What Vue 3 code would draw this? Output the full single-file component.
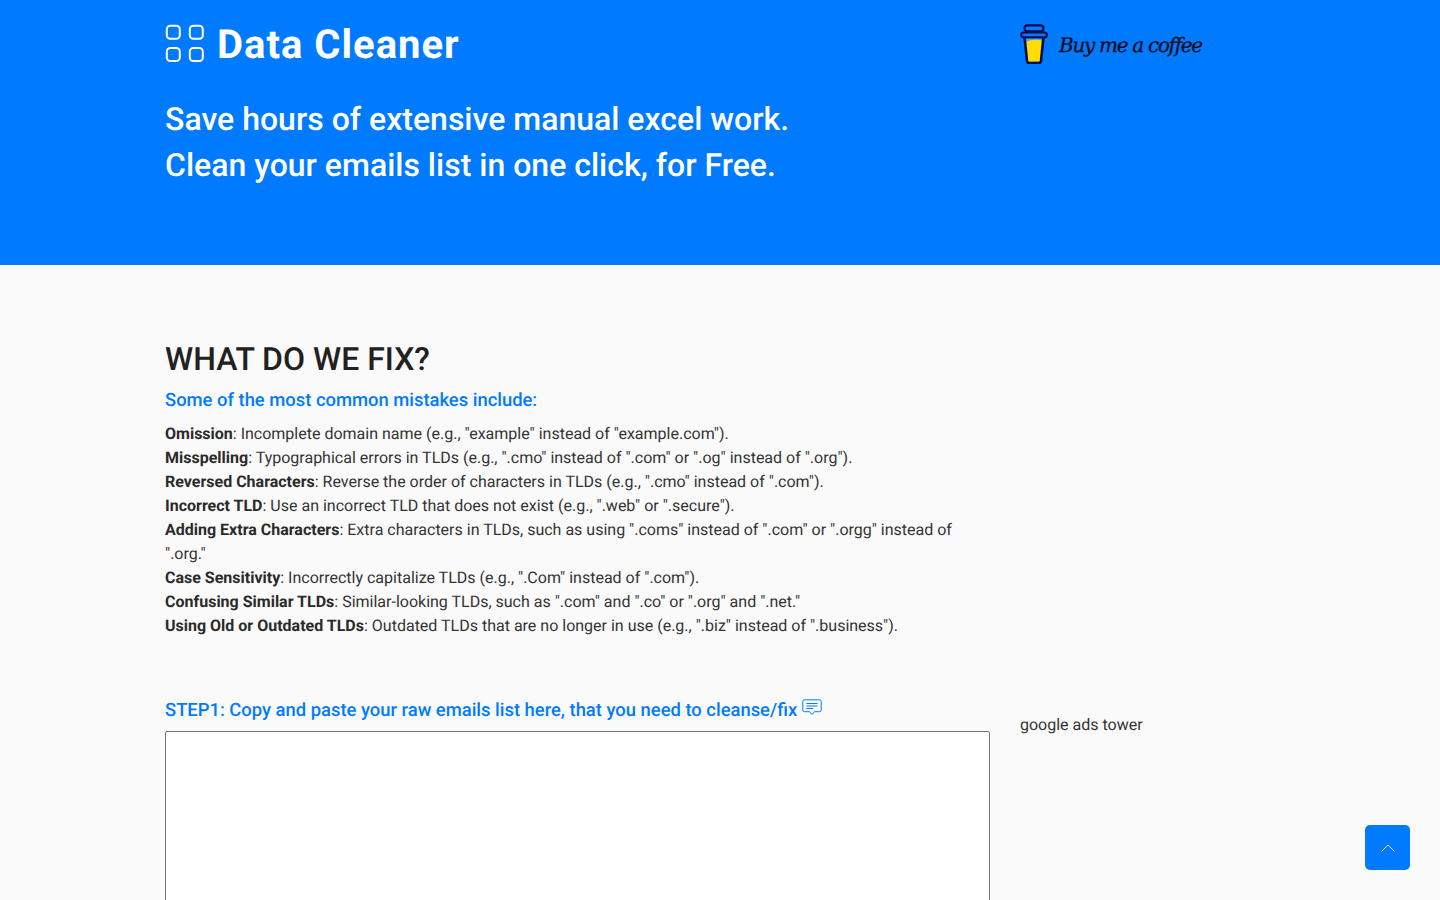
<script setup>
const mistakes = [
  ['Omission', ': Incomplete domain name (e.g., "example" instead of "example.com").'],
  ['Misspelling', ': Typographical errors in TLDs (e.g., ".cmo" instead of ".com" or ".og" instead of ".org").'],
  ['Reversed Characters', ': Reverse the order of characters in TLDs (e.g., ".cmo" instead of ".com").'],
  ['Incorrect TLD', ': Use an incorrect TLD that does not exist (e.g., ".web" or ".secure").'],
  ['Adding Extra Characters', ': Extra characters in TLDs, such as using ".coms" instead of ".com" or ".orgg" instead of ".org."'],
  ['Case Sensitivity', ': Incorrectly capitalize TLDs (e.g., ".Com" instead of ".com").'],
  ['Confusing Similar TLDs', ': Similar-looking TLDs, such as ".com" and ".co" or ".org" and ".net."'],
  ['Using Old or Outdated TLDs', ': Outdated TLDs that are no longer in use (e.g., ".biz" instead of ".business").'],
]
</script>

<template>
  <div class="page">
    <header class="hero">
      <div class="container hero-grid">
        <div class="hero-main">
          <div class="brand">
            <svg class="logo" viewBox="0 0 40 40" width="40" height="40" fill="none" stroke="#fff" stroke-width="2">
              <rect x="1.8" y="1.8" width="13" height="13" rx="3.5" />
              <rect x="24.8" y="1.8" width="13" height="13" rx="3.5" />
              <rect x="1.8" y="24" width="13" height="13" rx="3.5" />
              <rect x="24.8" y="24" width="13" height="13" rx="3.5" />
            </svg>
            <span class="brand-name">Data Cleaner</span>
          </div>
          <h2 class="tagline">Save hours of extensive manual excel work.<br />Clean your emails list in one click, for Free.</h2>
        </div>
        <div class="coffee">
          <svg class="cup" viewBox="0 0 28 40" width="28" height="40">
            <path d="M4.5 13 L7 37 Q7.3 39 9.5 39 H18.5 Q20.7 39 21 37 L23.5 13 Z" fill="#fff" fill-opacity=".3" />
            <path d="M5.5 18 Q14 14.5 22.5 16.5 L20.3 36 Q20 37.5 18.5 37.5 H9.5 Q8 37.5 7.7 36 Z" fill="#ffdd00" />
            <path d="M4.5 13 L7 37 Q7.3 39 9.5 39 H18.5 Q20.7 39 21 37 L23.5 13" fill="none" stroke="#0d0c4a" stroke-width="2.6" />
            <rect x="1.2" y="8.5" width="25.6" height="4.8" rx="2.4" fill="none" stroke="#0d0c4a" stroke-width="2.2" />
            <rect x="4.5" y="1.4" width="19" height="6" rx="3" fill="none" stroke="#0d0c4a" stroke-width="2.2" />
          </svg>
          <span class="coffee-text">Buy me a coffee</span>
        </div>
      </div>
    </header>

    <main class="container content">
      <div class="main-col">
        <h2 class="heading">WHAT DO WE FIX?</h2>
        <h3 class="sub">Some of the most common mistakes include:</h3>
        <div class="list">
          <div v-for="m in mistakes" :key="m[0]"><strong>{{ m[0] }}</strong>{{ m[1] }}</div>
        </div>
        <h3 class="step">
          STEP1: Copy and paste your raw emails list here, that you need to cleanse/fix
          <svg class="chat" viewBox="0 0 20 18" width="20" height="18" fill="none" stroke="#007bff" stroke-width="1">
            <path d="M2.5 .8 H17.5 Q19.2 .8 19.2 2.5 V11 Q19.2 12.7 17.5 12.7 H12.5 L10 15.5 L7.5 12.7 H2.5 Q.8 12.7 .8 11 V2.5 Q.8 .8 2.5 .8 Z" />
            <path d="M4.5 4.5 H15.5 M4.5 7 H15.5 M4.5 9.5 H11" />
          </svg>
        </h3>
        <textarea class="box"></textarea>
      </div>
      <aside class="side-col">google ads tower</aside>
    </main>

    <button class="top" type="button" aria-label="Back to top">
      <svg viewBox="0 0 16 10" width="16" height="10" fill="none" stroke="#fff" stroke-width="1">
        <path d="M1.5 8.5 L8 2 L14.5 8.5" />
      </svg>
    </button>
  </div>
</template>

<style>
html, body { margin: 0; height: 100%; overflow: hidden; background: #fafafa; }
</style>

<style scoped>
.page {
  height: 900px;
  overflow: hidden;
  background: #fafafa;
  color: #333;
  font-family: Roboto, "Liberation Sans", sans-serif;
  font-size: 16px;
  line-height: 24px;
  text-rendering: geometricPrecision;
}
.container {
  width: 1110px;
  margin: 0 auto;
  display: flex;
}
.hero {
  height: 265px;
  background: #007bff;
  color: #fff;
}
.hero-grid { gap: 30px; }
.hero-main { width: 825px; padding-top: 20px; }
.brand {
  display: flex;
  align-items: center;
  gap: 12px;
  height: 48px;
}
.logo { flex: none; }
.brand-name {
  font-size: 40px;
  font-weight: 700;
  letter-spacing: 1px;
  line-height: 48px;
  padding-top: 1px;
}
.tagline {
  margin: 28px 0 0;
  font-size: 32px;
  font-weight: 500;
  line-height: 46px;
}
.coffee {
  display: flex;
  align-items: center;
  gap: 11px;
  height: 40px;
  margin-top: 24px;
}
.cup { flex: none; }
.coffee-text {
  color: #0d0c22;
  font-family: "DejaVu Serif", serif;
  font-style: italic;
  font-size: 20px;
  letter-spacing: -1.3px;
  -webkit-text-stroke: 0.3px #0d0c22;
  white-space: nowrap;
  padding-top: 1px;
}
.content { gap: 30px; }
.main-col { width: 825px; flex: none; padding-top: 72px; }
.heading {
  margin: 0;
  font-size: 32px;
  font-weight: 500;
  line-height: 44px;
  color: #212121;
}
.sub, .step {
  margin: 0;
  font-size: 18.4px;
  font-weight: 500;
  color: #007bff;
  line-height: 24px;
}
.sub { margin-top: 8px; }
.list { margin-top: 9px; }
.list strong { font-weight: 700; color: #2a2a2a; }
.step { margin-top: 61px; }
.chat { vertical-align: -1px; }
.box {
  display: block;
  box-sizing: border-box;
  width: 100%;
  height: 300px;
  margin-top: 8px;
  background: #fff;
  border: 1px solid #757575;
  border-radius: 2px;
  padding: 8px;
}
.side-col { width: 255px; padding-top: 448px; }
.top {
  position: fixed;
  right: 30px;
  bottom: 30px;
  width: 45px;
  height: 45px;
  padding: 0;
  border: 0;
  border-radius: 5px;
  background: #007bff;
  display: flex;
  align-items: center;
  justify-content: center;
}
</style>
